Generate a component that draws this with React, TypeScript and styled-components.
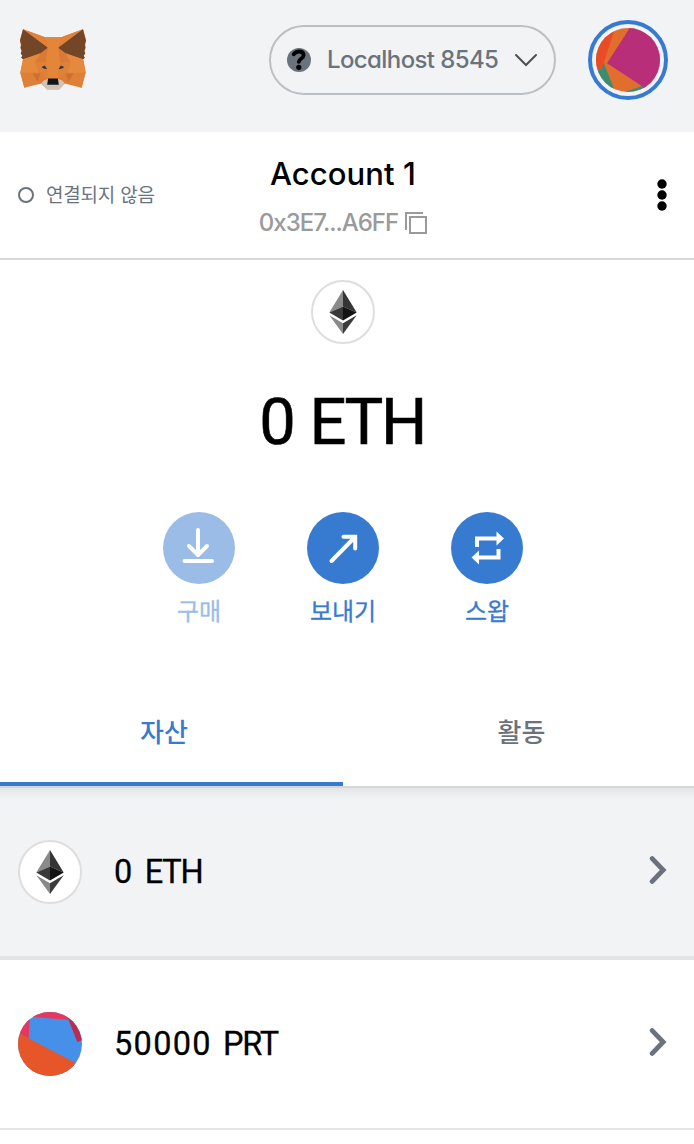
import React from "react";
import styled, { createGlobalStyle } from "styled-components";

const colors = {
  blue: "#377bd1",
  grey: "#6a737d",
  panel: "#f2f3f5",
  line: "#d6d9de",
};

const GlobalStyle = createGlobalStyle`
  *, *::before, *::after { box-sizing: border-box; }
  body { margin: 0; background: #fff; overflow: hidden; }
  svg { display: block; flex: none; }
`;

const Page = styled.div`
  width: 694px;
  height: 1144px;
  overflow: hidden;
  background: #fff;
  color: #000;
  font-family: Inter, "Noto Sans CJK KR", sans-serif;
  font-feature-settings: "cv11";
`;

const PlainButton = styled.button`
  margin: 0;
  padding: 0;
  border: 0;
  background: none;
  color: inherit;
  font: inherit;
  font-feature-settings: inherit;
  cursor: pointer;
`;

const Header = styled.header`
  display: flex;
  align-items: center;
  height: 132px;
  padding: 0 26px 12px 20px;
  background: ${colors.panel};
`;

const Logo = styled.div`
  padding-bottom: 1px;
`;

const NetworkButton = styled(PlainButton)`
  display: flex;
  align-items: center;
  width: 287px;
  height: 70px;
  margin-left: auto;
  padding: 0 17px 0 16px;
  border: 2px solid #bbc0c5;
  border-radius: 35px;
`;

const NetworkName = styled.span`
  flex: 1;
  padding: 0 0 1px 16px;
  text-align: left;
  white-space: nowrap;
  font-size: 24px;
  font-weight: 500;
  letter-spacing: -0.6px;
  color: ${colors.grey};
`;

const AvatarButton = styled(PlainButton)`
  display: flex;
  align-items: center;
  justify-content: center;
  width: 80px;
  height: 80px;
  margin-left: 32px;
  border: 4px solid ${colors.blue};
  border-radius: 50%;
`;

const AccountBar = styled.section`
  display: grid;
  grid-template-columns: 200px 286px 208px;
  height: 128px;
  border-bottom: 2px solid ${colors.line};
`;

const Status = styled.div`
  display: flex;
  align-items: center;
  gap: 12px;
  padding-left: 18px;
  font-size: 19px;
  line-height: 28px;
  letter-spacing: -0.2px;
  color: ${colors.grey};
  white-space: nowrap;
`;

const StatusText = styled.span`
  padding-top: 2px;
`;

const StatusDot = styled.span`
  flex: none;
  width: 16px;
  height: 16px;
  border: 2px solid ${colors.grey};
  border-radius: 50%;
`;

const AccountInfo = styled(PlainButton)`
  display: flex;
  flex-direction: column;
  align-items: center;
  padding-top: 22px;
  white-space: nowrap;
`;

const AccountName = styled.span`
  font-size: 31px;
  line-height: 40px;
  font-weight: 500;
  letter-spacing: 0.1px;
`;

const Address = styled.span`
  display: flex;
  align-items: center;
  gap: 7px;
  margin-top: 9px;
  font-size: 24px;
  line-height: 40px;
  font-weight: 500;
  letter-spacing: -1px;
  color: #989a9b;
`;

const MenuButton = styled(PlainButton)`
  display: flex;
  align-items: center;
  justify-content: flex-end;
  padding-right: 26px;
`;

const Overview = styled.section`
  display: flex;
  flex-direction: column;
  align-items: center;
  width: 686px;
  height: 428px;
  padding-top: 20px;
`;

const TokenBadge = styled.span`
  display: flex;
  flex: none;
  align-items: center;
  justify-content: center;
  width: 64px;
  height: 64px;
  border: 2px solid #dedede;
  border-radius: 50%;
  background: #fff;
`;

const Balance = styled.div`
  margin-top: 38px;
  padding-right: 2px;
  font-family: Roboto, sans-serif;
  font-size: 65px;
  line-height: 80px;
  font-weight: 400;
  letter-spacing: -0.2px;
  word-spacing: -2px;
  -webkit-text-stroke: 0.6px #000;
`;

const BalanceSymbol = styled.span`
  letter-spacing: -2.5px;
`;

const Actions = styled.div`
  display: flex;
  gap: 72px;
  margin-top: 50px;
`;

const Action = styled(PlainButton)<{ $muted?: boolean }>`
  display: flex;
  flex-direction: column;
  align-items: center;
  gap: 10px;
  width: 72px;
  font-size: 24px;
  line-height: 36px;
  color: ${colors.blue};
  opacity: ${(p) => (p.$muted ? 0.5 : 1)};
  white-space: nowrap;
  -webkit-text-stroke: 0.3px ${colors.blue};
`;

const ActionCircle = styled.span`
  width: 72px;
  height: 72px;
  border-radius: 50%;
  background: ${colors.blue};
`;

const Tabs = styled.nav`
  display: grid;
  grid-template-columns: 343px 1fr;
  height: 100px;
  border-bottom: 2px solid #d5d6d8;
`;

const Tab = styled(PlainButton)<{ $active?: boolean }>`
  height: 98px;
  padding: ${(p) => (p.$active ? "0 15px 5px 0" : "0 0 9px 6px")};
  border-bottom: ${(p) => (p.$active ? `4px solid ${colors.blue}` : "0")};
  font-size: 26px;
  font-weight: 500;
  line-height: 36px;
  color: ${(p) => (p.$active ? colors.blue : colors.grey)};
`;

const AssetRow = styled(PlainButton)<{ $selected?: boolean }>`
  display: flex;
  align-items: center;
  width: 100%;
  height: ${(p) => (p.$selected ? 172 : 170)}px;
  padding: 0 27px 0 18px;
  border-bottom: ${(p) => (p.$selected ? 4 : 2)}px solid #e3e4e5;
  background: ${(p) =>
    p.$selected
      ? `linear-gradient(#e4e5e6, ${colors.panel} 12px)`
      : "#fff"};
`;

const Amount = styled.span`
  flex: 1;
  padding: 0 0 1px 32px;
  text-align: left;
  font-family: Roboto, sans-serif;
  font-size: 32.5px;
  line-height: 44px;
  letter-spacing: 0.6px;
  word-spacing: 2.5px;
  -webkit-text-stroke: 0.3px #000;
`;

const Digits = styled.span`
  letter-spacing: 1.3px;
`;

const Symbol = styled.span`
  letter-spacing: -1.2px;
`;

const ChevronSlot = styled.span`
  padding-bottom: 4px;
`;

function Fox() {
  return (
    <svg width="66" height="61" viewBox="60 57 197 185" preserveAspectRatio="none" role="img" aria-label="Wallet">
      <path d="M69 58 135 82H183L248 58 257 92 249 149 256 188 244 235 194 222 177 240H141L123 222 73 235 61 190 69 149 60 92Z" fill="#de7d35" />
      <path d="M69 58 135 82 139 111ZM248 58 183 82 178 111Z" fill="#e0833a" />
      <path d="M69 58 143 114 125 132 69 149 63 144 67 138 62 131 65 123 61 114 64 104 60 92ZM248 58 174 114 191 132 248 149 254 144 250 138 255 131 252 123 256 114 253 104 257 92Z" fill="#744628" />
      <path d="M135 82H183L174 114 180 151 173 207H143L137 151 143 114Z" fill="#e48639" />
      <path d="M122 130 143 114 137 158 105 158ZM195 130 174 114 180 158 212 158Z" fill="#d97a36" />
      <path d="M69 149 122 130 105 158 117 190H61ZM248 149 195 130 212 158 200 190H256Z" fill="#e58a3c" />
      <path d="M61 190 98 192 113 217 73 235ZM256 188 219 192 204 217 244 235Z" fill="#df8039" />
      <path d="M97 192H121L113 218ZM220 192H196L204 218Z" fill="#d06d32" />
      <path d="M105 158 137 158 142 207 121 192ZM212 158 180 158 175 207 196 192Z" fill="#e18138" />
      <path d="M123 222 128 210 142 209 175 209 189 210 194 222 177 241H141Z" fill="#d2c2b5" />
      <path d="M113 217 121 192 142 209 131 213 123 222ZM204 217 196 192 175 209 186 213 194 222Z" fill="#df7c35" />
      <path d="M124 172 134 168 141 179 130 177ZM192 172 182 168 175 179 186 177Z" fill="#293b49" />
      <path d="M144 207H173L176 226H141Z" fill="#111719" />
    </svg>
  );
}

function QuestionIcon() {
  return (
    <svg width="24" height="24" viewBox="0 0 24 24">
      <circle cx="12" cy="12" r="12" fill={colors.grey} />
      <path d="M6.7 6.3C8.2 4.3 9.8 3.5 12 3.5c2.9 0 4.6 1.5 4.6 3.7 0 3.6-4.6 3.5-4.8 6.6" fill="none" stroke="#000" strokeWidth="3.8" strokeLinecap="round" />
      <circle cx="11.8" cy="19.3" r="2.6" />
    </svg>
  );
}

function Ether() {
  return (
    <svg width="28" height="44" viewBox="0 0 28 44">
      <path d="M14 0 .3 22.5 14 16.4Z" fill="#8a8a8a" />
      <path d="M14 0V16.4L27.7 22.5Z" fill="#353535" />
      <path d="M.3 22.5 14 16.4V30.5Z" fill="#393939" />
      <path d="M27.7 22.5 14 16.4V30.5Z" fill="#141414" />
      <path d="M.3 25.2 14 33.2V44Z" fill="#898989" />
      <path d="M27.7 25.2 14 33.2V44Z" fill="#3a3a3a" />
    </svg>
  );
}

function AccountAvatar() {
  return (
    <svg width="64" height="64" viewBox="48 54 192 192">
      <clipPath id="account-clip"><circle cx="144" cy="150" r="96" /></clipPath>
      <g clipPath="url(#account-clip)">
        <path d="M48 54H240V246H48Z" fill="#e26e2d" />
        <path d="M48 54H106L64 180 48 177Z" fill="#e94c27" />
        <path d="M48 177 64 180 71 158 106 246H48ZM135 246 195 224V246Z" fill="#3c8d70" />
        <path d="M153 48 81 160 198 236 245 230V48Z" fill="#b92e79" />
      </g>
    </svg>
  );
}

function TokenAvatar() {
  return (
    <svg width="64" height="64" viewBox="54 36 192 192">
      <clipPath id="token-clip"><circle cx="150" cy="132" r="96" /></clipPath>
      <g clipPath="url(#token-clip)">
        <path d="M54 36H246V228H54Z" fill="#4790e9" />
        <path d="M54 36H215L203 59 90 50 86 115 54 98Z" fill="#e8375d" />
        <path d="M203 53 232 126 250 119V45Z" fill="#b82d50" />
        <path d="M54 98 228 190 246 228H54Z" fill="#e65629" />
      </g>
    </svg>
  );
}

function Chevron() {
  return (
    <svg width="18" height="30" viewBox="0 0 18 30">
      <path d="M3.2 3.6 14.2 15 3.2 26.4" fill="none" stroke={colors.grey} strokeWidth="4.8" strokeLinecap="round" />
    </svg>
  );
}

export default function App() {
  return (
    <Page>
      <GlobalStyle />
      <Header>
        <Logo><Fox /></Logo>
        <NetworkButton>
          <QuestionIcon />
          <NetworkName>Localhost 8545</NetworkName>
          <svg width="22" height="14" viewBox="0 0 22 14">
            <path d="M1 2 11 12 21 2" fill="none" stroke="#4d4f51" strokeWidth="2" strokeLinecap="round" />
          </svg>
        </NetworkButton>
        <AvatarButton aria-label="Account menu"><AccountAvatar /></AvatarButton>
      </Header>

      <AccountBar>
        <Status><StatusDot /><StatusText>연결되지 않음</StatusText></Status>
        <AccountInfo>
          <AccountName>Account 1</AccountName>
          <Address>
            0x3E7...A6FF
            <svg width="22" height="22" viewBox="0 0 22 22" fill="none" stroke="#989a9b" strokeWidth="2">
              <path d="M1 18V1H18M5 5H21V21H5Z" />
            </svg>
          </Address>
        </AccountInfo>
        <MenuButton aria-label="Options">
          <svg width="12" height="34" viewBox="0 0 12 34">
            <circle cx="6" cy="6" r="4.7" /><circle cx="6" cy="17" r="4.7" /><circle cx="6" cy="28" r="4.7" />
          </svg>
        </MenuButton>
      </AccountBar>

      <Overview>
        <TokenBadge><Ether /></TokenBadge>
        <Balance>0 <BalanceSymbol>ETH</BalanceSymbol></Balance>
        <Actions>
          <Action $muted>
            <ActionCircle>
              <svg width="72" height="72" viewBox="0 0 72 72" fill="none" stroke="#fff" strokeWidth="4" strokeLinecap="round" strokeLinejoin="round">
                <path d="M35 18V42M26 34 35 43 44 34M21.5 49H49" />
              </svg>
            </ActionCircle>
            구매
          </Action>
          <Action>
            <ActionCircle>
              <svg width="72" height="72" viewBox="0 0 72 72" fill="none" stroke="#fff" strokeWidth="4" strokeLinecap="round">
                <path d="M24.5 49 48 25M36.5 24.8H48.2V36.5" />
              </svg>
            </ActionCircle>
            보내기
          </Action>
          <Action>
            <ActionCircle>
              <svg width="72" height="72" viewBox="0 0 72 72">
                <path d="M26 35V26.5H46M47.5 37V45.5H27" fill="none" stroke="#fff" strokeWidth="4" />
                <path d="M45.5 19.5 53 26.5 45.5 33.5ZM28 38.5 20.5 45.5 28 52.5Z" fill="#fff" />
              </svg>
            </ActionCircle>
            스왑
          </Action>
        </Actions>
      </Overview>

      <Tabs>
        <Tab $active>자산</Tab>
        <Tab>활동</Tab>
      </Tabs>

      <AssetRow $selected>
        <TokenBadge><Ether /></TokenBadge>
        <Amount><Digits>0</Digits> <Symbol>ETH</Symbol></Amount>
        <ChevronSlot><Chevron /></ChevronSlot>
      </AssetRow>
      <AssetRow>
        <TokenAvatar />
        <Amount><Digits>50000</Digits> <Symbol>PRT</Symbol></Amount>
        <ChevronSlot><Chevron /></ChevronSlot>
      </AssetRow>
    </Page>
  );
}
